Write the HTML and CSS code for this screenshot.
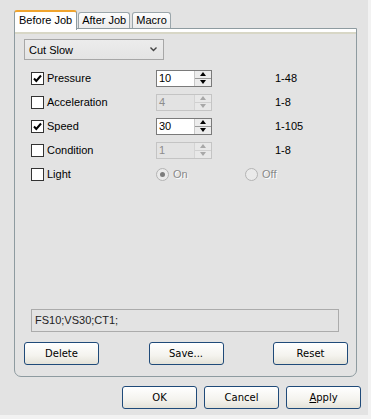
FILE: index.html
```html
<!DOCTYPE html>
<html lang="en">
<head>
    <meta charset="UTF-8">
    <title>Plotter Settings</title>
    <link rel="stylesheet" href="styles.css">
</head>
<body>
    <div class="dialog">
        <div class="tabs">
            <div class="tab active">Before Job</div>
            <div class="tab">After Job</div>
            <div class="tab macro">Macro</div>
        </div>

        <div class="panel">
            <div class="select">
                <span>Cut Slow</span>
                <svg width="7" height="5" viewBox="0 0 7 5"><polyline points="0.5,0.5 3.5,3.5 6.5,0.5" fill="none" stroke="#444" stroke-width="1.4"/></svg>
            </div>

            <div class="params">
                <!-- Pressure -->
                <label class="check"><span class="box checked"><svg width="9" height="9" viewBox="0 0 9 9"><polyline points="1,4.5 3.3,7 8,1.5" fill="none" stroke="#000" stroke-width="2"/></svg></span>Pressure</label>
                <div class="spin">
                    <span class="spin-value">10</span>
                    <span class="spin-btns"><span class="up"></span><span class="down"></span></span>
                </div>
                <span class="range">1-48</span>

                <!-- Acceleration -->
                <label class="check"><span class="box"></span>Acceleration</label>
                <div class="spin disabled">
                    <span class="spin-value">4</span>
                    <span class="spin-btns"><span class="up"></span><span class="down"></span></span>
                </div>
                <span class="range">1-8</span>

                <!-- Speed -->
                <label class="check"><span class="box checked"><svg width="9" height="9" viewBox="0 0 9 9"><polyline points="1,4.5 3.3,7 8,1.5" fill="none" stroke="#000" stroke-width="2"/></svg></span>Speed</label>
                <div class="spin">
                    <span class="spin-value">30</span>
                    <span class="spin-btns"><span class="up"></span><span class="down"></span></span>
                </div>
                <span class="range">1-105</span>

                <!-- Condition -->
                <label class="check"><span class="box"></span>Condition</label>
                <div class="spin disabled">
                    <span class="spin-value">1</span>
                    <span class="spin-btns"><span class="up"></span><span class="down"></span></span>
                </div>
                <span class="range">1-8</span>

                <!-- Light -->
                <label class="check"><span class="box"></span>Light</label>
                <div class="radios">
                    <span class="radio on"><span class="dot"></span>On</span>
                    <span class="radio"><span class="dot"></span>Off</span>
                </div>
            </div>

            <div class="command">FS10;VS30;CT1;</div>

            <div class="actions">
                <button class="btn">Delete</button>
                <button class="btn">Save...</button>
                <button class="btn">Reset</button>
            </div>
        </div>

        <div class="footer">
            <button class="btn">OK</button>
            <button class="btn">Cancel</button>
            <button class="btn"><u>A</u>pply</button>
        </div>
    </div>
</body>
</html>
```

FILE: styles.css
```css
html {
    background: #f2f2f2;
}
body {
    margin: 0;
    font-family: "Liberation Sans", Arial, sans-serif;
    font-size: 11px;
    color: #000;
}
.dialog {
    box-sizing: border-box;
    width: 368px;
    height: 415px;
    background: #e3e3e3;
    padding: 10px 7px 0 14px;
}
.tabs {
    display: flex;
    align-items: flex-end;
    height: 18px;
}
.tab {
    box-sizing: border-box;
    height: 16px;
    padding: 0 3px;
    line-height: 15px;
    border: 1px solid #9ba6ab;
    border-bottom: none;
    border-radius: 3px 3px 0 0;
    background: linear-gradient(#fdfdfd, #ececec);
    margin-left: 1px;
}
.tab.macro {
    margin-left: 2px;
}
.tab.active {
    position: relative;
    z-index: 1;
    height: 20px;
    margin: 0 0 -2px 0;
    padding: 0 4px;
    line-height: 16px;
    background: #fff;
    border-color: #8e9ba0;
    border-top: 2px solid #f0a42e;
}
.panel {
    box-sizing: border-box;
    height: 349px;
    width: 343px;
    display: flex;
    flex-direction: column;
    border: 1px solid #8e9ba0;
    border-radius: 0 0 7px 7px;
    padding: 10px 8px 11px 9px;
    background: linear-gradient(#fff 0, #fff 3px, #d8d7c6 3px, #d8d7c6 5px, #e3e3e3 5px);
}
.select {
    box-sizing: border-box;
    width: 140px;
    height: 21px;
    display: flex;
    align-items: center;
    justify-content: space-between;
    padding: 0 6px 0 4px;
    border: 1px solid #a7a7a7;
    background: linear-gradient(#ececec, #e4e4e4);
    margin-bottom: 6px;
}
.params {
    display: grid;
    grid-template-columns: 125px 56px 63px auto;
    grid-auto-rows: 24px;
    align-items: center;
    padding-left: 7px;
}
.check {
    display: flex;
    align-items: center;
}
.box {
    box-sizing: border-box;
    width: 13px;
    height: 13px;
    border: 1px solid #333;
    background: #fff;
    margin-right: 3px;
    display: flex;
    align-items: center;
    justify-content: center;
}
.spin {
    box-sizing: border-box;
    height: 17px;
    display: flex;
    border: 1px solid #7a7a7a;
    background: #fff;
}
.spin-value {
    flex: 1;
    padding-left: 2px;
    line-height: 15px;
}
.spin-btns {
    width: 16px;
    display: flex;
    flex-direction: column;
    border-left: 1px solid #c8c8c8;
    background: #ececec;
}
.spin-btns span {
    flex: 1;
    display: flex;
    align-items: center;
    justify-content: center;
}
.spin-btns .up {
    border-bottom: 1px solid #9a9a9a;
}
.spin-btns .up::after {
    content: "";
    border: 3px solid transparent;
    border-top: none;
    border-bottom: 4px solid #000;
}
.spin-btns .down::after {
    content: "";
    border: 3px solid transparent;
    border-bottom: none;
    border-top: 4px solid #000;
}
.spin.disabled {
    border-color: #c4c4c4;
    background: #e3e3e3;
    color: #8c8c8c;
}
.spin.disabled .spin-btns {
    border-left-color: #d4d4d4;
    background: #e8e8e8;
}
.spin.disabled .up {
    border-bottom-color: #d0d0d0;
}
.spin.disabled .up::after {
    border-bottom-color: #a8a8a8;
}
.spin.disabled .down::after {
    border-top-color: #a8a8a8;
}
.range {
    grid-column: 4;
}
.radios {
    grid-column: 2 / 5;
    display: flex;
    align-items: center;
    color: #8a8a8a;
    text-shadow: 1px 1px #fff;
}
.radio {
    display: flex;
    align-items: center;
    width: 89px;
}
.dot {
    box-sizing: border-box;
    width: 13px;
    height: 13px;
    border: 1px solid #b4b4b4;
    border-radius: 50%;
    background: #eaeaea;
    margin-right: 4px;
    display: flex;
    align-items: center;
    justify-content: center;
}
.radio.on .dot::after {
    content: "";
    width: 5px;
    height: 5px;
    border-radius: 50%;
    background: #7c7c7c;
}
.command {
    box-sizing: border-box;
    margin: auto 9px 10px 7px;
    height: 23px;
    padding: 0 3px;
    line-height: 21px;
    border: 1px solid #ababab;
    background: #e3e3e3;
    color: #222;
}
.actions {
    display: flex;
    justify-content: space-between;
}
.btn {
    box-sizing: border-box;
    width: 75px;
    height: 23px;
    padding: 0;
    font-family: "DejaVu Sans", Tahoma, sans-serif;
    font-size: 10px;
    color: #000;
    border: 1px solid #1f4a79;
    border-radius: 3px;
    background: linear-gradient(#ffffff, #f4f3ee 60%, #e4e2d8);
}
.footer {
    display: flex;
    justify-content: flex-end;
    gap: 7px;
    margin-top: 9px;
}
```
